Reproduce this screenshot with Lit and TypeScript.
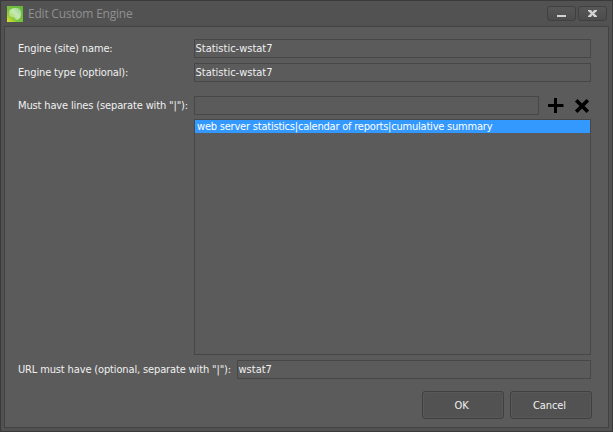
import { LitElement, html, css } from "lit";
import { customElement } from "lit/decorators.js";

@customElement("app-root")
export class AppRoot extends LitElement {
  static styles = css`
    :host {
      display: block;
      width: 613px;
      height: 432px;
      font: 11px/13px "DejaVu Sans Condensed", "Noto Sans", sans-serif;
      color: #f0f0f0;
    }
    * { box-sizing: border-box; }
    .window {
      display: flex;
      flex-direction: column;
      height: 432px;
      padding: 0 3px 3px;
      border: 1px solid #3a3a3a;
      background: #525252;
    }
    .titlebar {
      display: flex;
      align-items: center;
      height: 25px;
      padding: 0 1px 0 3px;
      flex: none;
    }
    .logo { flex: none; width: 16px; height: 16px; }
    .title {
      flex: 1;
      margin-left: 5px;
      font: 12px/16px "Open Sans", "Noto Sans", sans-serif;
      letter-spacing: -0.22px;
      color: #909090;
      white-space: nowrap;
    }
    .controls { display: flex; gap: 2px; margin-right: 1px; }
    .control {
      display: block;
      width: 29px;
      height: 15px;
      padding: 0;
      border: 1px solid #404040;
      border-radius: 3px;
      background: linear-gradient(#575757, #4c4c4c);
    }
    .control svg { display: block; }
    .panel {
      flex: 1;
      display: flex;
      flex-direction: column;
      padding: 12px 17px 8px 13px;
      border: 1px solid #424242;
      background: #5b5b5b;
    }
    .row { display: flex; align-items: center; height: 19px; flex: none; }
    .second { margin-top: 5px; }
    .third { margin-top: 14px; }
    .label { flex: none; width: 176px; white-space: nowrap; letter-spacing: -0.14px; }
    .url-label { width: 219px; }
    .field {
      flex: 1;
      height: 19px;
      padding: 2px 0.5px;
      border: 1px solid #474747;
      white-space: nowrap;
    }
    .tools { display: flex; width: 52px; flex: none; }
    .list {
      height: 236px;
      margin: 4px 0 5px 176px;
      flex: none;
      border: 1px solid #474747;
    }
    .item {
      height: 13px;
      padding-left: 2px;
      background: #3399ff;
      color: #fff;
      letter-spacing: -0.21px;
      line-height: 14px;
      white-space: nowrap;
    }
    .actions { display: flex; justify-content: flex-end; gap: 6px; margin: 12px -1px 0 0; }
    .button {
      width: 82px;
      height: 28px;
      padding: 0 3px 0 0;
      border: 1px solid #404040;
      border-radius: 3px;
      background: #525252;
      box-shadow: inset 0 0 0 1px #585858;
      color: inherit;
      font: inherit;
      letter-spacing: -0.1px;
    }
  `;

  render() {
    return html`
      <div class="window">
        <div class="titlebar">
          <svg class="logo" viewBox="0 0 16 16">
            <defs>
              <linearGradient id="g" x1="1" y1="0" x2="0" y2="1">
                <stop offset="0" stop-color="#62b53c" />
                <stop offset=".65" stop-color="#7cc43c" />
                <stop offset="1" stop-color="#e4e52c" />
              </linearGradient>
              <linearGradient id="h" x1="1" y1="0" x2="0" y2="1">
                <stop offset="0" stop-color="#8fcf78" />
                <stop offset=".45" stop-color="#c6e8b8" />
                <stop offset="1" stop-color="#a6d848" />
              </linearGradient>
            </defs>
            <rect width="16" height="16" fill="url(#g)" />
            <path d="M2 7C2 3.500 5 2 8.500 2C12.500 1.500 14.500 4 14.200 7.500C14 11 12.500 13.500 10 14C8 14.200 8.500 12 6.500 11.500C3.500 11 2 10 2 7Z" fill="url(#h)" />
          </svg>
          <div class="title">Edit Custom Engine</div>
          <div class="controls">
            <button class="control" aria-label="Minimize">
              <svg width="27" height="13"><rect x="9" y="8" width="9" height="2" fill="#d2d2d2" /></svg>
            </button>
            <button class="control" aria-label="Close">
              <svg width="27" height="13"><path d="M9 3H12L13.500 5L15 3H18V4L15.200 6.500L18 9V10H15L13.500 8L12 10H9V9L11.800 6.500L9 4Z" fill="#d2d2d2" /></svg>
            </button>
          </div>
        </div>
        <div class="panel">
          <div class="row">
            <div class="label">Engine (site) name:</div>
            <div class="field">Statistic-wstat7</div>
          </div>
          <div class="row second">
            <div class="label">Engine type (optional):</div>
            <div class="field">Statistic-wstat7</div>
          </div>
          <div class="row third">
            <div class="label">Must have lines (separate with "|"):</div>
            <div class="field"></div>
            <svg class="tools" width="52" height="19" viewBox="0 0 52 19">
              <path d="M9 9.500H24.500M16.500 2V17" stroke="#000" stroke-width="3" />
              <path d="M37.200 4.200L48.800 15.800M48.800 4.200L37.200 15.800" stroke="#000" stroke-width="3.600" />
            </svg>
          </div>
          <div class="list">
            <div class="item">web server statistics|calendar of reports|cumulative summary</div>
          </div>
          <div class="row">
            <div class="label url-label">URL must have (optional, separate with "|"):</div>
            <div class="field">wstat7</div>
          </div>
          <div class="actions">
            <button class="button">OK</button>
            <button class="button">Cancel</button>
          </div>
        </div>
      </div>
    `;
  }
}
